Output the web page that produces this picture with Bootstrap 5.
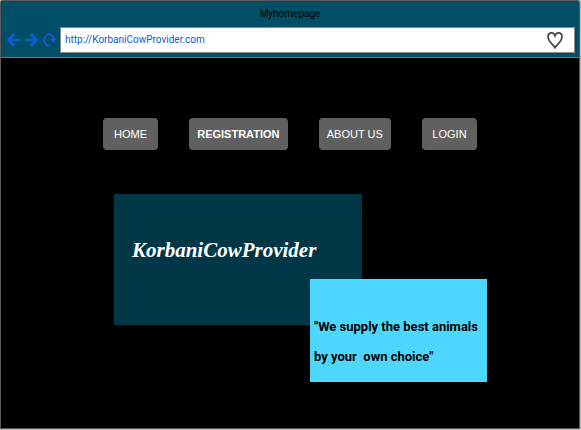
<!DOCTYPE html>
<html lang="en">
<head>
<meta charset="utf-8">
<meta name="viewport" content="width=device-width, initial-scale=1">
<title>Myhomepage</title>
<link href="https://cdn.jsdelivr.net/npm/bootstrap@5.3.0/dist/css/bootstrap.min.css" rel="stylesheet">
<style>
body { background: #b9b9b9; font-family: "Liberation Sans", sans-serif; }
.browser { min-height: calc(100vh - 1px); margin-right: 1px; background: #000; border: 1px solid #5c5c5c; border-radius: 3px 3px 0 0; overflow: hidden; }
.chrome { background: #004f66; border-bottom: 1px solid #6c7a80; padding-bottom: 4px; }
.window-title { color: #000; font-family: Roboto, sans-serif; font-size: 10px; line-height: 26px; }
.tools { padding: 0 4px; gap: 2px; }
.tool { width: 16px; height: 26px; color: #0b5cd6; }
.address { height: 26px; background: #fff; border: 1px solid #8b8b8b; margin-left: 1px; padding-right: 10px; }
.address input { color: #0b5cd6; font-family: Roboto, sans-serif; font-size: 10px; line-height: 24px; padding: 0 4px; background: transparent; }
.fav { color: #444; }
.stage { width: 374px; padding-top: 60px; }
.menu-btn { height: 32px; min-width: 55px; padding: 0 8px; border-radius: 4px; background: #606060; color: #fff; font-size: 11px; line-height: 32px; }
.menu-btn:hover { background: #707070; color: #fff; }
.hero { display: grid; grid-template-columns: 196px 52px 125px; grid-template-rows: 85px 46px 57px; margin: 44px 0 0 11px; }
.brand { grid-area: 1 / 1 / 3 / 3; background: #003747; color: #fff; padding: 38px 18px; font-family: "Liberation Serif", serif; font-size: 21px; line-height: 36px; font-style: italic; font-weight: 700; }
.slogan { grid-area: 2 / 2 / 4 / 4; background: #4dd7ff; color: #000; padding: 33px 4px 8px; font-family: Roboto, sans-serif; font-size: 13px; line-height: 30px; font-weight: 700; white-space: pre; }
</style>
<script src="https://cdn.jsdelivr.net/npm/bootstrap@5.3.0/dist/js/bootstrap.bundle.min.js" defer></script>
</head>
<body>
<div class="browser">
  <header class="chrome">
    <div class="window-title text-center">Myhomepage</div>
    <div class="tools d-flex align-items-center">
      <button class="tool btn p-0 border-0 d-flex align-items-center" type="button" aria-label="Back">
        <svg width="16" height="16" viewBox="0 0 16 16" fill="none" stroke="currentColor" stroke-width="2.6"><path d="M9 2L3.500 8L9 14M3.500 8H15"/></svg>
      </button>
      <button class="tool btn p-0 border-0 d-flex align-items-center" type="button" aria-label="Forward">
        <svg width="16" height="16" viewBox="0 0 16 16" fill="none" stroke="currentColor" stroke-width="2.6"><path d="M8 2L13.500 8L8 14M13.500 8H2"/></svg>
      </button>
      <button class="tool btn p-0 border-0 d-flex align-items-center" type="button" aria-label="Reload">
        <svg width="16" height="16" viewBox="0 0 16 16"><path d="M9.500 13.200A5 5.500 0 1 1 13 7.500" fill="none" stroke="currentColor" stroke-width="1.800"/><path d="M9 6.500H15.500L12.500 11Z" fill="currentColor"/></svg>
      </button>
      <div class="address d-flex align-items-center flex-grow-1">
        <input class="border-0 flex-grow-1 w-100" type="text" aria-label="Address" value="http://KorbaniCowProvider.com">
        <button class="fav btn p-0 border-0 d-flex" type="button" aria-label="Favourite">
          <svg width="18" height="18" viewBox="0 0 18 18"><path d="M9 16.500C8 14.500 2 10.500 2 5.700C2 1 7.500 .5 9 4.700C10.500 .5 16 1 16 5.700C16 10.500 10 14.500 9 16.500Z" fill="none" stroke="currentColor" stroke-width="1.700"/></svg>
        </button>
      </div>
    </div>
  </header>
  <main class="stage mx-auto">
    <nav class="d-flex justify-content-between" aria-label="Main">
      <a class="menu-btn btn border-0" href="#">HOME</a>
      <a class="menu-btn btn border-0 fw-bold" href="#" aria-current="page">REGISTRATION</a>
      <a class="menu-btn btn border-0" href="#">ABOUT US</a>
      <a class="menu-btn btn border-0" href="#">LOGIN</a>
    </nav>
    <section class="hero">
      <h1 class="brand m-0">KorbaniCowProvider</h1>
      <p class="slogan m-0">"We supply the best animals
by your  own choice"</p>
    </section>
  </main>
</div>
</body>
</html>
